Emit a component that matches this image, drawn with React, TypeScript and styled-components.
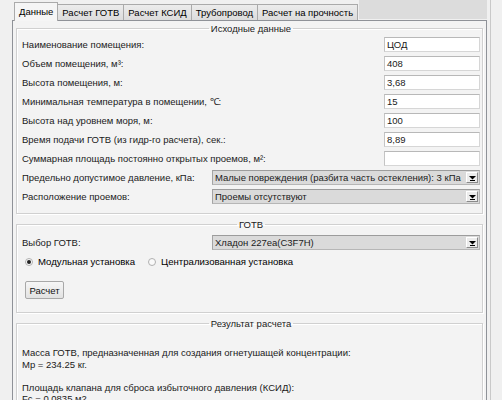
import styled, { createGlobalStyle } from "styled-components";

const GlobalStyle = createGlobalStyle`
  html, body {
    margin: 0;
    background: #f0f0f0;
  }
  body {
    font: 9.5px "Liberation Sans", Arial, sans-serif;
    color: #000;
  }
`;

const Window = styled.div`
  box-sizing: border-box;
  width: 491px;
  height: 400px;
  overflow: hidden;
  padding-left: 12px;
  padding-right: 3px;
  border-right: 1px solid #c9c9c9;
`;

const TabStrip = styled.div`
  display: flex;
  align-items: flex-end;
  height: 20px;
  padding-left: 2px;
  position: relative;
  z-index: 1;
`;

const Tab = styled.div<{ $active?: boolean }>`
  box-sizing: border-box;
  height: ${(p) => (p.$active ? 19 : 16)}px;
  margin-bottom: ${(p) => (p.$active ? -1 : 0)}px;
  padding: ${(p) => (p.$active ? "3px 4px 0" : "2px 4px 0")};
  border: 1px solid #aaaaaa;
  border-bottom: none;
  margin-right: -1px;
  background: ${(p) =>
    p.$active ? "#f5f5f5" : "linear-gradient(#ececec, #dcdcdc)"};
  white-space: nowrap;
  line-height: 12px;
`;

const TabFiller = styled.div`
  flex: 1;
  align-self: stretch;
  margin-left: 2px;
  background: #dcdcdc;
  margin-bottom: 1px;
`;

const Page = styled.div`
  border: 1px solid #8f9298;
  background: #f3f3f3;
  padding: 1px 3px 0;
  height: 400px;
  display: flex;
  flex-direction: column;
  gap: 4px;
`;

const Group = styled.fieldset<{ $pad?: string }>`
  margin: 0;
  min-width: 0;
  padding: ${(p) => p.$pad ?? "0 2px 7px 5px"};
  border: 1px solid #d0d0d0;
  box-shadow: inset 1px 1px 0 #fff, 1px 1px 0 #fff;
`;

const Legend = styled.legend`
  margin-inline: auto;
  padding: 0 2px;
  line-height: 13px;
  color: #1a1a1a;
`;

const Row = styled.div`
  display: flex;
  align-items: center;
  justify-content: space-between;
  height: 19px;
  color: #1a1a1a;
`;

const TextBox = styled.div`
  box-sizing: border-box;
  width: 96px;
  height: 15px;
  padding: 0 2px;
  line-height: 13px;
  background: #fff;
  border: 1px solid #d6d6d6;
  border-top-color: #b8b8b8;
  border-left-color: #c4c4c4;
`;

const Combo = styled.div`
  box-sizing: border-box;
  width: 268px;
  height: 15px;
  display: flex;
  align-items: center;
  padding: 0 1px 0 2px;
  background: #dadada;
  border: 1px solid #b6b6b6;
  border-top-color: #9c9c9c;
  border-left-color: #a4a4a4;
`;

const ComboText = styled.span`
  flex: 1;
  line-height: 13px;
  white-space: nowrap;
  overflow: hidden;
`;

const DropButton = styled.span`
  box-sizing: border-box;
  width: 12px;
  height: 11px;
  display: grid;
  place-items: center;
  background: #ececec;
  border: 1px solid #fff;
  border-right-color: #8a8a8a;
  border-bottom-color: #8a8a8a;
`;

const Radios = styled.div`
  display: flex;
  align-items: center;
  height: 19px;
  padding-left: 3px;
  gap: 13px;
  font-size: 9.6px;
`;

const RadioLabel = styled.label`
  display: flex;
  align-items: center;
  gap: 5px;
`;

const RadioDot = styled.span<{ $checked?: boolean }>`
  box-sizing: border-box;
  width: 8px;
  height: 8px;
  border-radius: 50%;
  border: 1px solid #b0b0b0;
  background: #fafafa;
  display: grid;
  place-items: center;

  &::after {
    content: "";
    width: 4px;
    height: 4px;
    border-radius: 50%;
    background: ${(p) => (p.$checked ? "#222" : "transparent")};
  }
`;

const Button = styled.button`
  box-sizing: border-box;
  margin: 10px 0 0 3px;
  width: 39px;
  height: 18px;
  padding: 0;
  font: inherit;
  color: #111;
  background: linear-gradient(#f6f6f6, #e2e2e2);
  border: 1px solid #a8a8a8;
  border-radius: 2px;
`;

const Result = styled.div`
  padding-top: 17px;
  line-height: 11.5px;
  white-space: pre;
  color: #1a1a1a;
`;

const fields = [
  ["Наименование помещения:", "ЦОД"],
  ["Объем помещения, м³:", "408"],
  ["Высота помещения, м:", "3,68"],
  ["Минимальная температура в помещении, ℃:", "15"],
  ["Высота над уровнем моря, м:", "100"],
  ["Время подачи ГОТВ (из гидр-го расчета), сек.:", "8,89"],
  ["Суммарная площадь постоянно открытых проемов, м²:", ""],
];

const choices = [
  ["Предельно допустимое давление, кПа:", "Малые повреждения (разбита часть остекления): 3 кПа"],
  ["Расположение проемов:", "Проемы отсутствуют"],
];

function Arrow() {
  return (
    <svg width="7" height="6" viewBox="0 0 7 6">
      <path d="M0 1h7L3.5 4.5z" fill="#000" />
      <rect x="1" y="5" width="5" height="1" fill="#000" />
    </svg>
  );
}

function Select({ value }: { value: string }) {
  return (
    <Combo>
      <ComboText>{value}</ComboText>
      <DropButton>
        <Arrow />
      </DropButton>
    </Combo>
  );
}

export default function App() {
  return (
    <>
      <GlobalStyle />
      <Window>
        <TabStrip>
          <Tab $active>Данные</Tab>
          <Tab>Расчет ГОТВ</Tab>
          <Tab>Расчет КСИД</Tab>
          <Tab>Трубопровод</Tab>
          <Tab>Расчет на прочность</Tab>
          <TabFiller />
        </TabStrip>
        <Page>
          <Group>
            <Legend>Исходные данные</Legend>
            {fields.map(([label, value]) => (
              <Row key={label}>
                <span>{label}</span>
                <TextBox>{value}</TextBox>
              </Row>
            ))}
            {choices.map(([label, value]) => (
              <Row key={label}>
                <span>{label}</span>
                <Select value={value} />
              </Row>
            ))}
          </Group>
          <Group $pad="2px 2px 13px 5px">
            <Legend>ГОТВ</Legend>
            <Row>
              <span>Выбор ГОТВ:</span>
              <Select value="Хладон 227ea(C3F7H)" />
            </Row>
            <Radios>
              <RadioLabel>
                <RadioDot $checked />
                Модульная установка
              </RadioLabel>
              <RadioLabel>
                <RadioDot />
                Централизованная установка
              </RadioLabel>
            </Radios>
            <Button>Расчет</Button>
          </Group>
          <Group $pad="0 2px 20px 5px">
            <Legend>Результат расчета</Legend>
            <Result>
              {"Масса ГОТВ, предназначенная для создания огнетушащей концентрации:\n" +
                "Mp = 234.25 кг.\n\n" +
                "Площадь клапана для сброса избыточного давления (КСИД):\n" +
                "Fc = 0.0835 м2"}
            </Result>
          </Group>
        </Page>
      </Window>
    </>
  );
}
